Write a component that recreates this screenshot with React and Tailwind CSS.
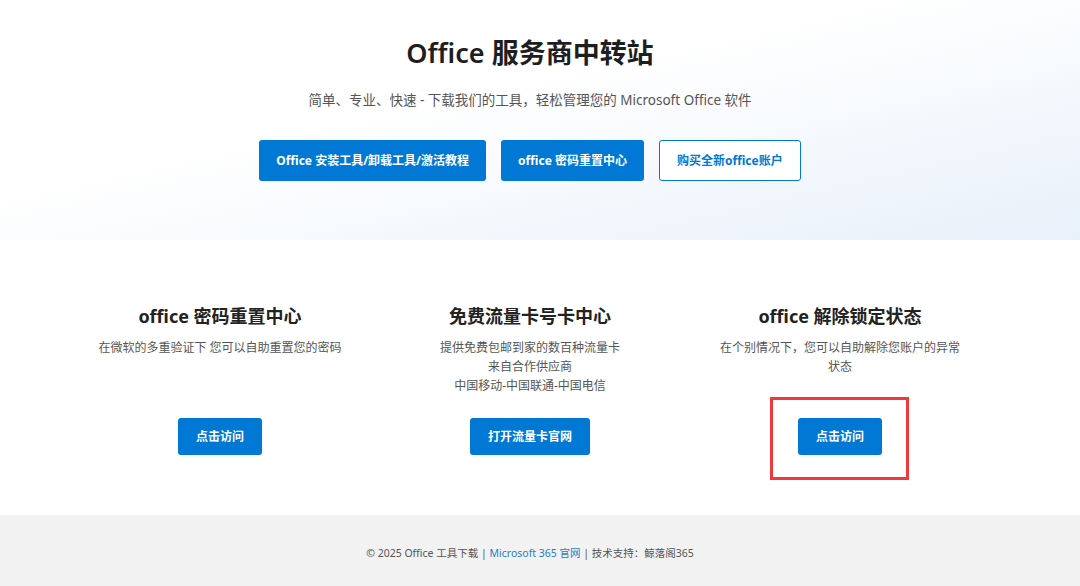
const font = { fontFamily: '"Noto Sans", "Noto Sans CJK SC", sans-serif' };

const CARDS = [
  {
    title: 'office 密码重置中心',
    lines: ['在微软的多重验证下 您可以自助重置您的密码'],
    action: '点击访问',
  },
  {
    title: '免费流量卡号卡中心',
    lines: ['提供免费包邮到家的数百种流量卡', '来自合作供应商', '中国移动-中国联通-中国电信'],
    action: '打开流量卡官网',
  },
  {
    title: 'office 解除锁定状态',
    lines: ['在个别情况下，您可以自助解除您账户的异常状态'],
    action: '点击访问',
    marked: true,
  },
];

function Card({ title, lines, action, marked }) {
  return (
    <div className="w-[310px] px-[30px] flex flex-col items-center text-center">
      <h3 className="text-[18px] leading-[24px] font-bold text-[#222]">{title}</h3>
      <div className="mt-[10px] h-[60px] text-[12px] leading-[19px] text-[#555]">
        {lines.map(l => (
          <p key={l}>{l}</p>
        ))}
      </div>
      <div className="relative mt-[20px]">
        <button className="h-[37px] px-[18px] rounded-[3px] bg-[#0078d4] text-white text-[12px] font-bold">
          {action}
        </button>
        {/* red highlight frame around the button */}
        {marked && (
          <div className="absolute -left-[28px] -right-[27px] -top-[21px] -bottom-[25px] border-[3px] border-[#ee3a3a]" />
        )}
      </div>
    </div>
  );
}

export default function App() {
  return (
    <div className="min-h-screen bg-white" style={font}>
      <header className="h-[240px] bg-linear-to-br from-white from-40% to-[#e8f0fa] pr-5 pt-[34px] flex flex-col items-center">
        <h1 className="text-[27px] leading-[38px] font-semibold text-[#1e1e1e]">Office 服务商中转站</h1>
        <p className="mt-[18px] text-[13.5px] leading-[20px] text-[#555]">
          简单、专业、快速 - 下载我们的工具，轻松管理您的 Microsoft Office 软件
        </p>
        <div className="mt-[30px] flex gap-[15px]">
          <a className="h-[41px] px-[17px] flex items-center rounded-[3px] bg-[#0078d4] text-white text-[12px] font-bold">
            Office 安装工具/卸载工具/激活教程
          </a>
          <a className="h-[41px] px-[17px] flex items-center rounded-[3px] bg-[#0078d4] text-white text-[12px] font-bold">
            office 密码重置中心
          </a>
          <a className="h-[41px] px-[17px] flex items-center rounded-[3px] border border-[#0078d4] bg-white text-[#0078d4] text-[12px] font-bold">
            购买全新office账户
          </a>
        </div>
      </header>

      <section className="h-[275px] pr-5 pt-[64px] flex justify-center">
        {CARDS.map(c => (
          <Card key={c.title} {...c} />
        ))}
      </section>

      <footer className="h-[71px] bg-[#f2f2f2] pr-5 pt-[30px] text-center text-[10.5px] leading-[16px] text-[#555]">
        © 2025 Office 工具下载 | <a className="text-[#2a7bc4]">Microsoft 365 官网</a> | 技术支持：鲸落阁365
      </footer>
    </div>
  );
}
